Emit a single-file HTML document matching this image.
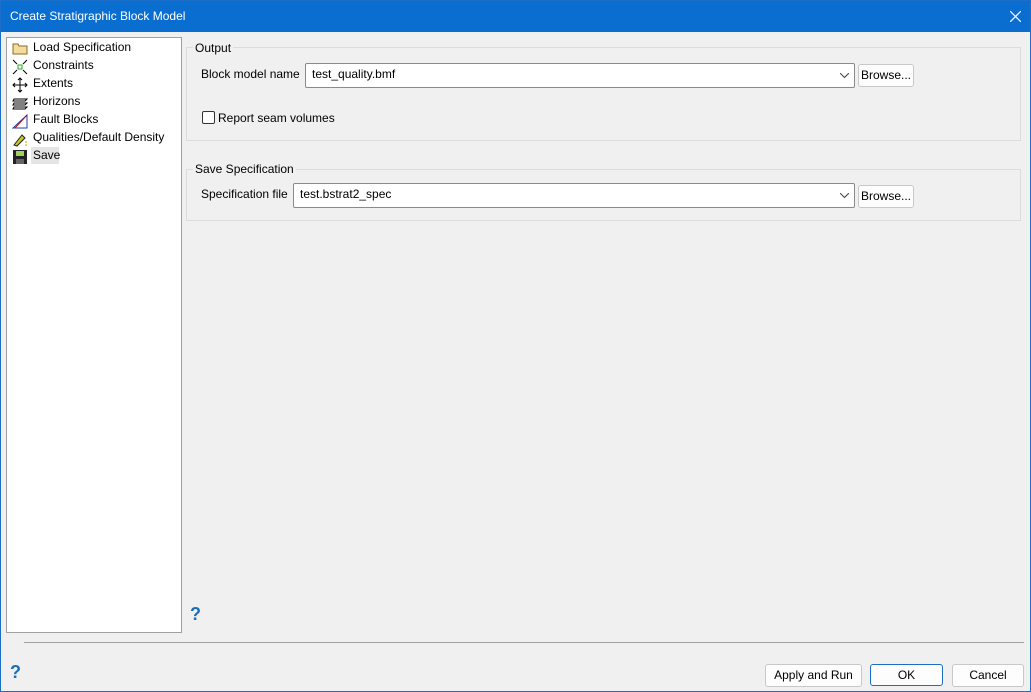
<!DOCTYPE html>
<html><head><style>
body{margin:0;width:1031px;height:692px;overflow:hidden;font-family:"Liberation Sans",sans-serif;font-size:12px;color:#000;}
.win{position:absolute;left:0;top:0;width:1029px;height:690px;border:1px solid #1b6fc8;background:#f0f0f0;}
.title{position:absolute;left:0;top:0;width:1029px;height:31px;background:#0a6ed1;color:#fff;}
.title span{position:absolute;left:9px;top:8px;font-size:12px;}
.abs{position:absolute;}
.left{left:5px;top:36px;width:174px;height:594px;background:#fff;border:1px solid #a0a0a0;}
.item{position:absolute;left:26px;font-size:12px;}
.grp{border:1px solid #dcdcdc;}
.lbl{background:#f0f0f0;padding:0 2px;}
.combo{background:#fff;border:1px solid #8a8a8a;border-radius:2px;height:23px;}
.combo span{position:absolute;left:6px;top:3px;}
.btn{background:#fdfdfd;border:1px solid #c8c8c8;border-radius:3px;text-align:center;line-height:20px;}
.help{color:#1c6fb5;font-weight:bold;font-size:18px;}
</style></head><body>
<div class="win">
<div class="title"><span>Create Stratigraphic Block Model</span>
<svg class="abs" style="left:1009px;top:10px" width="11" height="11"><path d="M0 0L11 11M11 0L0 11" stroke="#fff" stroke-width="1.2"/></svg></div>
<div class="abs left">
<svg class="abs" style="left:5px;top:4px" width="16" height="13"><path d="M1 2h5l1 2h8v8H1z" fill="#f3dc9c" stroke="#8a6a2a"/></svg>
<div class="item" style="top:2px">Load Specification</div>
<svg class="abs" style="left:5px;top:21px" width="16" height="16"><rect x="6" y="6" width="4" height="4" fill="none" stroke="#2a2"/><path d="M1 1l4 4M15 1l-4 4M1 15l4-4M15 15l-4-4" stroke="#000"/></svg>
<div class="item" style="top:20px">Constraints</div>
<svg class="abs" style="left:5px;top:39px" width="16" height="16"><path d="M8 1v14M1 8h14M6 3l2-2 2 2M6 13l2 2 2-2M3 6l-2 2 2 2M13 6l2 2-2 2" stroke="#000" fill="none"/></svg>
<div class="item" style="top:38px">Extents</div>
<svg class="abs" style="left:5px;top:57px" width="16" height="16"><path d="M2 4h13l-2 2H1zM2 8h13l-2 2H1zM2 12h13l-2 2H1z" stroke="#000" fill="none"/></svg>
<div class="item" style="top:56px">Horizons</div>
<svg class="abs" style="left:5px;top:75px" width="16" height="16"><path d="M1 15h14V2z" fill="none" stroke="#1b3fa8"/><path d="M3 15L15 2" stroke="#c00"/></svg>
<div class="item" style="top:74px">Fault Blocks</div>
<svg class="abs" style="left:5px;top:93px" width="16" height="16"><path d="M2 14L10 4l3 3-8 8z" fill="#c8c820" stroke="#222"/><path d="M14 10v5" stroke="#b9b000" stroke-dasharray="2 1"/></svg>
<div class="item" style="top:92px">Qualities/Default Density</div>
<svg class="abs" style="left:5px;top:111px" width="16" height="16"><rect x="1" y="1" width="14" height="14" fill="#222"/><rect x="4" y="2" width="8" height="5" fill="#9fd15f"/><rect x="4" y="10" width="8" height="5" fill="#666"/></svg>
<div class="abs" style="left:24px;top:109px;width:28px;height:17px;background:#e5e5e5"></div>
<div class="item" style="top:110px">Save</div>
</div>
<div class="abs grp" style="left:185px;top:46px;width:833px;height:92px"></div>
<div class="abs lbl" style="left:192px;top:40px">Output</div>
<div class="abs" style="left:200px;top:66px">Block model name</div>
<div class="abs combo" style="left:304px;top:62px;width:548px"><span>test_quality.bmf</span>
<svg class="abs" style="left:534px;top:9px" width="9" height="6"><path d="M0 0l4.5 4.5L9 0" stroke="#444" fill="none"/></svg></div>
<div class="abs btn" style="left:857px;top:63px;width:54px;height:21px">Browse...</div>
<div class="abs" style="left:201px;top:110px;width:11px;height:11px;border:1px solid #333;border-radius:2px;background:#fff"></div>
<div class="abs" style="left:217px;top:110px">Report seam volumes</div>
<div class="abs grp" style="left:185px;top:168px;width:833px;height:50px"></div>
<div class="abs lbl" style="left:192px;top:161px">Save Specification</div>
<div class="abs" style="left:200px;top:186px">Specification file</div>
<div class="abs combo" style="left:292px;top:182px;width:560px"><span>test.bstrat2_spec</span>
<svg class="abs" style="left:546px;top:9px" width="9" height="6"><path d="M0 0l4.5 4.5L9 0" stroke="#444" fill="none"/></svg></div>
<div class="abs btn" style="left:857px;top:184px;width:54px;height:21px">Browse...</div>
<div class="abs help" style="left:189px;top:603px">?</div>
<div class="abs" style="left:23px;top:641px;width:1000px;height:1px;background:#a0a0a0"></div>
<div class="abs help" style="left:9px;top:661px">?</div>
<div class="abs btn" style="left:764px;top:663px;width:95px;height:21px">Apply and Run</div>
<div class="abs btn" style="left:869px;top:663px;width:71px;height:20px;border:1px solid #1a6fc4">OK</div>
<div class="abs btn" style="left:951px;top:663px;width:70px;height:21px">Cancel</div>
</div>
</body></html>
